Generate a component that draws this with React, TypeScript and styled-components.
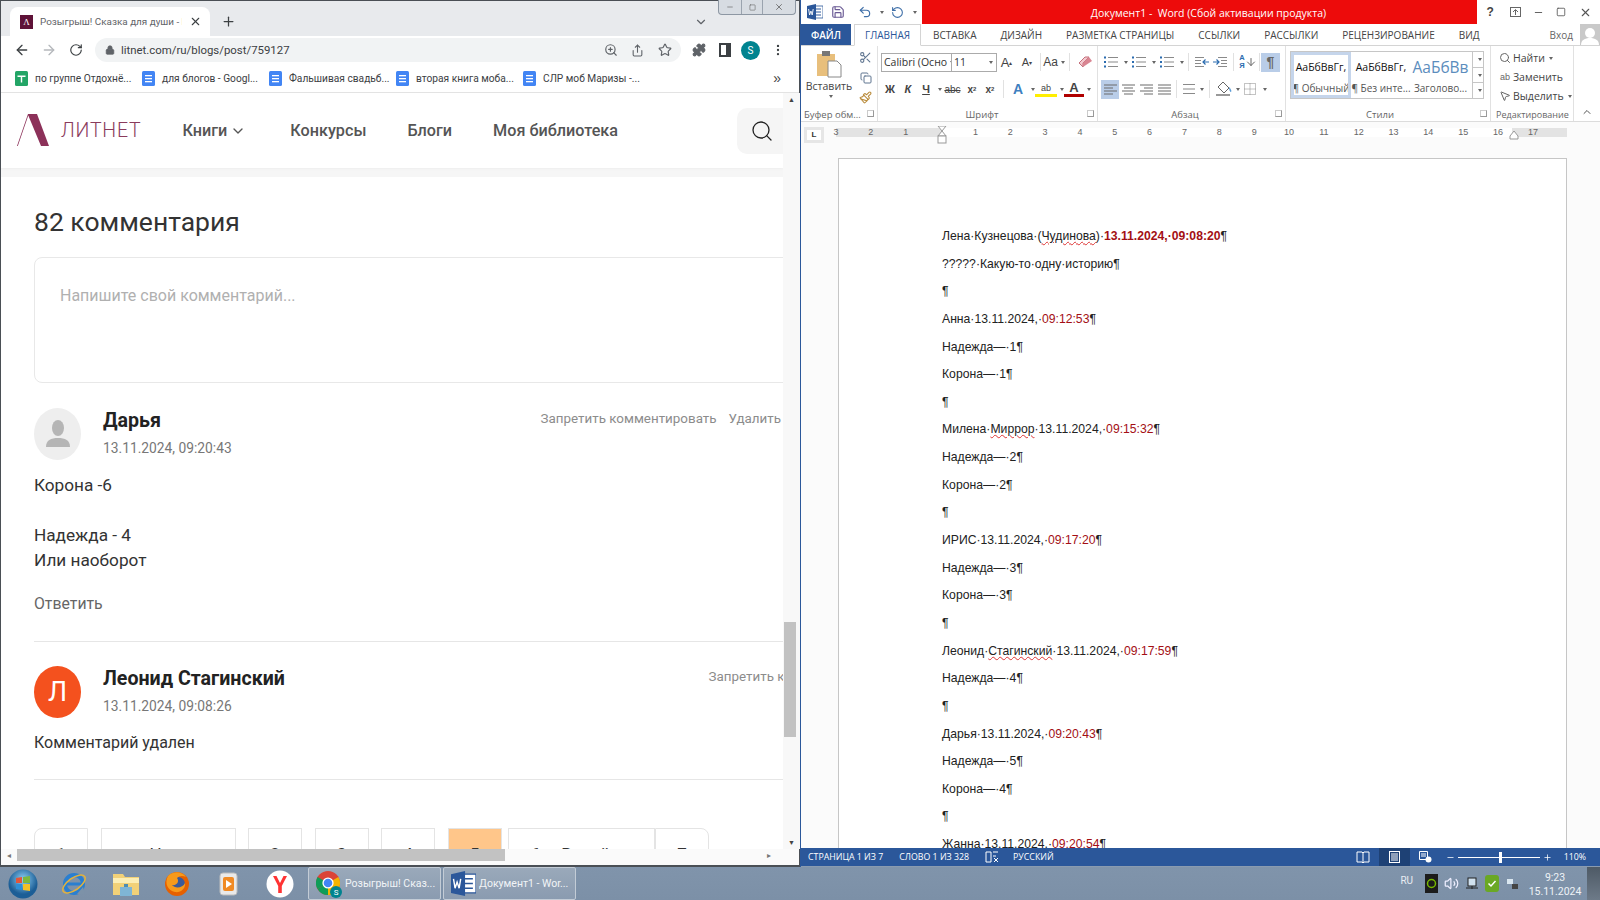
import React from "react";
import styled, { createGlobalStyle } from "styled-components";
import { ArrowLeft, ArrowRight, RotateCw, Lock, ZoomIn, Share, Star, Puzzle, MoreVertical, X, Plus, ChevronDown, Scissors, Copy, Paintbrush, Search, Save, Undo2, RotateCcw, Minus, Square, Volume2, MousePointer2, ChevronUp, ArrowDown } from "lucide-react";

const Global = createGlobalStyle`
  html, body { margin: 0; padding: 0; width: 1600px; height: 900px; overflow: hidden; }
  body { font-family: "Liberation Sans", Arial, sans-serif; background: #7d92a8; }
  * { box-sizing: border-box; }
`;

const Desktop = styled.div`display:flex;flex-direction:column;width:1600px;height:900px;overflow:hidden;`;
const Windows = styled.div`display:flex;height:867px;`;

/* Chrome */
const Browser = styled.section`width:800px;height:867px;display:flex;flex-direction:column;background:#fff;border:1px solid #4a4f55;border-width:1px 1px 2px 1px;position:relative;`;
const TabStrip = styled.div`height:35px;background:#e8eaed;display:flex;align-items:flex-end;padding-left:9px;`;
const Tab = styled.div`width:200px;height:29px;background:#fff;border-radius:8px 8px 0 0;display:flex;align-items:center;padding:0 8px 0 10px;gap:7px;`;
const Favicon = styled.div`width:13px;height:14px;background:#5e1238;color:#fff;font:9px "Liberation Serif",serif;display:flex;align-items:center;justify-content:center;flex:none;`;
const TabTitle = styled.span`font:9.9px Roboto,sans-serif;color:#5f6368;white-space:nowrap;overflow:hidden;flex:1;`;
const NewTab = styled.div`width:36px;height:29px;display:flex;align-items:center;justify-content:center;color:#3c4043;`;
const TabEnd = styled.div`margin-left:auto;width:105px;height:29px;display:flex;align-items:center;color:#5f6368;`;
const Caption = styled.div`position:absolute;top:-1px;right:3px;width:78px;height:15px;display:flex;background:#d7dce2;border:1px solid #8d97a3;border-top:none;border-radius:0 0 4px 4px;`;
const CaptionBtn = styled.div`flex:${p=>p.$w||1};display:flex;align-items:center;justify-content:center;border-right:1px solid #9aa3ae;color:#666;&:last-child{border:none}`;
const Toolbar = styled.div`height:28px;display:flex;align-items:center;padding-left:7px;color:#5f6368;`;
const ToolBtn = styled.div`width:${p=>p.$w||27}px;height:24px;display:flex;align-items:center;justify-content:center;color:${p=>p.$c||"#3c4043"};flex:none;`;
const Omnibox = styled.div`width:586px;height:24px;margin-left:6px;background:#f1f3f4;border-radius:12px;display:flex;align-items:center;padding:0 3px 0 10px;margin-right:4px;flex:none;`;
const UrlText = styled.span`font:11.4px Roboto,sans-serif;color:#3c4043;margin-left:6px;flex:1;`;
const Profile = styled.div`width:19px;height:19px;border-radius:50%;background:#00838f;color:#fff;font:10px Roboto,sans-serif;display:flex;align-items:center;justify-content:center;margin:0 4px;flex:none;`;
const Bookmarks = styled.div`height:29px;display:flex;align-items:center;padding-left:14px;border-bottom:1px solid #e3e3e3;`;
const Bookmark = styled.div`width:127px;display:flex;align-items:center;gap:7px;font:10.2px Roboto,sans-serif;color:#3c4043;white-space:nowrap;flex:none;`;
const BookmarkMore = styled.div`margin-left:auto;padding-right:18px;font:14px "Liberation Sans",sans-serif;color:#444;`;
const Viewport = styled.div`flex:1;min-height:0;display:flex;flex-direction:column;`;
const ViewportTop = styled.div`flex:1;min-height:0;display:flex;`;
const Scroller = styled.div`width:782px;overflow:hidden;display:flex;flex-direction:column;flex:none;`;
const SiteHeader = styled.header`height:75px;display:flex;align-items:center;padding-left:16px;flex:none;box-shadow:0 1px 2px #eee;position:relative;`;
const LogoText = styled.span`font:300 19.5px Roboto,sans-serif;color:#8a3b5c;margin-left:11px;letter-spacing:.8px;`;
const NavItem = styled.a`font:500 16.2px Roboto,sans-serif;color:#555;margin-left:${p=>p.$ml}px;display:flex;align-items:center;gap:3px;`;
const SearchBtn = styled.div`margin-left:auto;width:46px;height:46px;background:#f5f5f5;border-radius:10px 0 0 10px;display:flex;align-items:center;justify-content:center;color:#222;padding-left:4px;`;
const Band = styled.div`height:9px;background:#f6f6f6;flex:none;`;
const Content = styled.main`padding-left:33px;flex:1;min-height:0;`;
const Heading = styled.h2`margin:26px 0 17px;font:400 26.5px/37px Roboto,sans-serif;color:#333;`;
const CommentBox = styled.div`width:800px;height:126px;border:1px solid #e8e8e8;border-radius:8px;padding:27px 25px;font:16px/22px Roboto,sans-serif;color:#b0b0b0;`;
const Comment = styled.article`padding-top:${p=>p.$pt}px;height:${p=>p.$h}px;border-bottom:1px solid #e6e6e6;width:750px;`;
const Head = styled.div`display:flex;width:${p=>p.$w}px;align-items:flex-start;`;
const Avatar = styled.div`width:47px;height:52px;border-radius:50%;background:${p=>p.$bg};color:#fff;font:27px Roboto,sans-serif;display:flex;align-items:center;justify-content:center;flex:none;margin-right:22px;`;
const Meta = styled.div`display:flex;flex-direction:column;`;
const Name = styled.div`font:700 19.6px/26px Roboto,sans-serif;color:#222;`;
const DateText = styled.div`font:13.8px/18px Roboto,sans-serif;color:#777;margin-top:5px;`;
const Actions = styled.div`margin-left:auto;display:flex;gap:12px;font:13.4px/18px Roboto,sans-serif;color:#8c8c8c;white-space:nowrap;padding-top:2px;`;
const Body = styled.div`font:${p=>p.$f||17.2}px/25px Roboto,sans-serif;color:#333;margin-top:${p=>p.$mt||13}px;`;
const Reply = styled.div`font:15.8px/22px Roboto,sans-serif;color:#666;margin-top:20px;`;
const Pager = styled.nav`display:flex;gap:12.5px;margin-top:48px;height:60px;`;
const PageBtn = styled.div`width:${p=>p.$w}px;height:50px;border:1px solid #e4e4e4;background:${p=>p.$on?"#ffc68a":"#fff"};color:#333;font:17px/50px Roboto,sans-serif;text-align:center;flex:none;border-radius:${p=>p.$r||"0"};margin-right:${p=>p.$mr||0}px;`;
const VBar = styled.div`width:17px;background:#f8f8f8;position:relative;flex:none;display:flex;flex-direction:column;align-items:center;justify-content:space-between;padding:3px 0;font-size:7px;color:#444;`;
const VThumb = styled.div`position:absolute;left:1px;top:529px;width:12px;height:115px;background:#c2c2c2;`;
const HBar = styled.div`height:16px;background:#fafafa;display:flex;align-items:center;justify-content:space-between;padding:0 28px 4px 6px;font-size:8px;color:#777;flex:none;position:relative;`;
const HThumb = styled.div`position:absolute;left:16px;top:0;width:488px;height:12px;background:#c2c2c2;`;

/* Word */
const Word = styled.section`width:800px;height:867px;background:#8a9bb0;display:flex;flex-direction:column;border-left:1px solid #2b579a;padding-bottom:1px;`;
const TitleBar = styled.div`height:24px;display:flex;flex:none;background:#fff;`;
const Quick = styled.div`width:121px;display:flex;align-items:center;padding-left:6px;color:#555;flex:none;`;
const Red = styled.div`flex:1;background:#ed0b0b;color:#fff;font:10.5px "Open Sans",sans-serif;display:flex;align-items:center;justify-content:center;padding:2px 0 0 18px;white-space:pre;`;
const WinBtns = styled.div`width:123px;display:flex;align-items:center;flex:none;color:#555;justify-content:space-around;padding:0 2px 0 0;`;
const RibbonTabs = styled.div`height:22px;display:flex;align-items:stretch;flex:none;border-bottom:1px solid #d4d4d4;font:10px "Open Sans",sans-serif;color:#444;background:#fff;`;
const FileTab = styled.div`width:50px;background:#2b579a;color:#fff;display:flex;align-items:center;justify-content:center;font-weight:600;`;
const RTab = styled.div`margin-left:${p=>p.$ml}px;display:flex;align-items:center;padding:0 ${p=>p.$on?10:0}px;white-space:nowrap;color:${p=>p.$on?"#2b579a":"#444"};${p=>p.$on?"border:1px solid #d4d4d4;border-bottom:1px solid #fff;height:22px;background:#fff;":""}`;
const SignIn = styled.div`margin-left:auto;display:flex;align-items:center;gap:7px;color:#666;`;
const UserPic = styled.div`width:20px;height:21px;background:#c9c9c9;display:flex;align-items:flex-end;justify-content:center;color:#fff;`;
const Ribbon = styled.div`height:76px;display:flex;flex:none;border-bottom:1px solid #dcdcdc;position:relative;background:#fff;`;
const Group = styled.div`width:${p=>p.$w}px;border-right:1px solid #e1e1e1;display:flex;flex-direction:column;padding:${p=>p.$p||"4px 0 0 3px"};flex:none;position:relative;`;
const GroupBody = styled.div`height:59px;display:flex;`;
const GroupLabel = styled.div`font:${p=>p.$s||9.5}px "Open Sans",sans-serif;color:#666;text-align:${p=>p.$a||"center"};white-space:nowrap;padding-right:${p=>p.$pr||0}px;`;
const Launcher = styled.span`position:absolute;right:3px;bottom:4px;width:7px;height:7px;border:1px solid #999;border-top-color:#ccc;border-left-color:#ccc;`;
const Paste = styled.div`width:50px;display:flex;flex-direction:column;align-items:center;font:10.5px "Open Sans",sans-serif;color:#444;flex:none;`;
const PasteLabel = styled.span`margin-top:1px;`;
const ClipTools = styled.div`display:flex;flex-direction:column;justify-content:space-between;color:#5f7590;padding:1px 0 4px;width:24px;align-items:center;`;
const Rows = styled.div`display:flex;flex-direction:column;gap:${p=>p.$g||7}px;padding-top:${p=>p.$pt||2}px;`;
const IRow = styled.div`display:flex;align-items:center;height:${p=>p.$h||20}px;`;
const Combo = styled.div`width:${p=>p.$w}px;height:19px;border:1px solid #ababab;font:10.5px "Open Sans",sans-serif;color:#333;display:flex;align-items:center;padding-left:2px;justify-content:space-between;padding-right:3px;white-space:nowrap;overflow:hidden;flex:none;margin-right:-1px;`;
const Slot = styled.div`width:${p=>p.$w}px;height:19px;display:flex;align-items:center;justify-content:center;flex:none;color:${p=>p.$c||"#444"};font:${p=>p.$f||'10.5px "Liberation Sans",sans-serif'};background:${p=>p.$on?"#b9cde8":"transparent"};`;
const ColorSlot = styled(Slot)`height:16px;border-bottom:3px solid ${p=>p.$bar};`;
const Arrow = styled.span`width:0;height:0;border:2px solid transparent;border-top:3px solid #666;margin-left:3px;margin-top:2px;flex:none;`;
const Divider = styled.span`width:1px;height:18px;background:#e1e1e1;flex:none;margin:0 ${p=>p.$m||3}px;`;
const Gallery = styled.div`width:194px;height:48px;border:1px solid #c6c6c6;display:flex;margin:1px 0 0 4px;`;
const StyleItem = styled.div`width:${p=>p.$w}px;display:flex;flex-direction:column;align-items:center;justify-content:center;gap:6px;padding-top:3px;flex:none;white-space:nowrap;overflow:hidden;${p=>p.$on?"border:3px solid #c5d5eb;":""}`;
const StyleSample = styled.span`font:${p=>p.$big?'15.5px/18px "Open Sans"':'10.5px/18px "Open Sans"'},sans-serif;color:${p=>p.$big?"#5b8dbd":"#111"};`;
const StyleName = styled.span`font:10px/13px "Open Sans",sans-serif;color:#555;`;
const GalleryScroll = styled.div`margin-left:auto;width:11px;border-left:1px solid #c6c6c6;display:flex;flex-direction:column;`;
const GalleryStep = styled.div`flex:1;border-bottom:1px solid #c6c6c6;display:flex;align-items:center;justify-content:center;&:last-child{border:none}`;
const EditRows = styled.div`display:flex;flex-direction:column;padding:0 0 0 2px;gap:3px;`;
const EditRow = styled.div`display:flex;align-items:center;height:16px;gap:1px;font:10.5px "Open Sans",sans-serif;color:#444;white-space:nowrap;`;
const EditIcon = styled.span`width:14px;display:flex;justify-content:center;color:#666;font:9px "Liberation Sans",sans-serif;`;
const Collapse = styled.div`position:absolute;right:7px;bottom:3px;color:#555;display:flex;`;
const RulerRow = styled.div`height:36px;flex:none;display:flex;background:#fbfbfb;padding:5px 0 0 3px;position:relative;`;
const LBtn = styled.div`width:20px;height:16px;background:#fff;border:3px solid #e6e6e6;font:700 8px/10px "Liberation Sans",sans-serif;color:#333;text-align:center;flex:none;`;
const Ruler = styled.div`margin-left:-5.4px;width:748px;height:9px;margin-top:1px;display:flex;align-items:center;background:
  linear-gradient(90deg,transparent 17.4px,#e3e3e3 17.4px,#e3e3e3 123.4px,#fff 123.4px,#fff 693.4px,#e3e3e3 693.4px);`;
const RulerCell = styled.span`width:34.85px;flex:none;text-align:center;font:9px/9px "Liberation Sans",sans-serif;color:#666;`;
const IndentMark = styled.div`position:absolute;left:${p=>p.$x}px;top:4px;`;
const DocArea = styled.div`flex:1;min-height:0;background:#fbfbfb;overflow:hidden;padding:0 33px 0 37px;`;
const Paper = styled.div`background:#fff;border:1px solid #c6c6c6;min-height:800px;padding:64px 0 0 103px;`;
const DocLine = styled.div`height:27.65px;font:12.2px/27.65px "Liberation Sans",sans-serif;color:#222;white-space:pre;`;
const Mark = styled.span`color:${p=>p.$red?"#a30f14":"inherit"};font-weight:${p=>p.$b?700:400};${p=>p.$w?"text-decoration:underline wavy #d33;text-decoration-thickness:1px;":""}`;
const Status = styled.footer`height:18px;flex:none;background:#2b579a;color:#fff;font:8.8px "Open Sans",sans-serif;display:flex;align-items:center;padding-left:7px;white-space:nowrap;`;
const StatusItem = styled.span`margin:0 ${p=>p.$mr||0}px 0 ${p=>p.$ml||0}px;display:flex;`;
const StatusRight = styled.div`margin-left:auto;display:flex;align-items:center;height:18px;`;
const ViewBtn = styled.div`width:31px;height:18px;display:flex;align-items:center;justify-content:center;background:${p=>p.$on?"#1e4175":"transparent"};margin-right:${p=>p.$mr||0}px;`;
const ZoomTrack = styled.div`width:82px;height:1px;background:#fff;margin:0 3px;position:relative;`;
const ZoomThumb = styled.span`position:absolute;left:41px;top:-5px;width:3px;height:11px;background:#fff;`;

/* Taskbar */
const Taskbar = styled.footer`height:33px;flex:none;display:flex;align-items:center;background:linear-gradient(#8094ab,#7c90a7);color:#fff;`;
const PinRow = styled.div`display:flex;margin-left:-3px;`;
const Pin = styled.div`width:51.5px;height:33px;display:flex;align-items:center;justify-content:center;flex:none;`;
const TaskBtn = styled.div`width:${p=>p.$w}px;height:33px;margin-left:${p=>p.$ml}px;background:linear-gradient(#9aa9ba,#8a9bb0);border:1px solid #c3ccd6;border-radius:2px;display:flex;align-items:center;gap:3px;padding-left:7px;font:10.5px Roboto,sans-serif;color:#f1f4f7;white-space:nowrap;flex:none;`;
const Tray = styled.div`margin-left:auto;display:flex;align-items:center;height:33px;`;
const TrayText = styled.span`font:10px Roboto,sans-serif;color:#e8edf2;margin-right:8px;padding-bottom:6px;`;
const TrayIcon = styled.div`width:20.4px;display:flex;justify-content:center;flex:none;`;
const Clock = styled.div`width:60px;margin-left:2px;text-align:center;font:10.5px/14px Roboto,sans-serif;color:#eef2f6;padding-top:2px;`;
const ShowDesktop = styled.div`width:13px;height:33px;margin-left:2px;background:linear-gradient(#4e5a66,#6d7a88);`;

const Lines = ({ n = 3, w = 14, dots = false, c = "#8a8a8a" }: { n?: number; w?: number; dots?: boolean; c?: string }) => (
  <svg width={w} height="12" viewBox={`0 0 ${w} 12`}>
    {Array.from({ length: n }).map((_, i) => {
      const y = 1.5 + (i * 9) / (n - 1);
      return <g key={i}>{dots && <rect x="0" y={y - 1} width="2" height="2" fill="#2b6cb0" />}<rect x={dots ? 4 : 0} y={y - 0.5} width={dots ? w - 4 : w} height="1" fill={c} /></g>;
    })}
  </svg>
);
const Indent = ({ flip = false }: { flip?: boolean }) => (
  <svg width="14" height="12" viewBox="0 0 14 12" style={flip ? { transform: "scaleX(-1)" } : undefined}>
    <path d="M5 1.5h9M8 4.5h6M8 7.5h6M5 10.5h9" stroke="#8a8a8a" fill="none" />
    <path d="M0 6h6M3.5 3.5L6 6 3.5 8.5" stroke="#2b6cb0" fill="none" strokeWidth="1.2" />
  </svg>
);
const Align = ({ m }: { m: "l" | "c" | "r" | "j" }) => {
  const rows = [13, 9, 13, 9];
  return (
    <svg width="13" height="11" viewBox="0 0 13 11">
      {rows.map((r, i) => {
        const w = m === "j" ? 13 : r;
        const x = m === "l" || m === "j" ? 0 : m === "c" ? (13 - w) / 2 : 13 - w;
        return <rect key={i} x={x} y={i * 3 + 0.5} width={w} height="1" fill="#6a6a6a" />;
      })}
    </svg>
  );
};
const DocIcon = () => (
  <svg width="13" height="15" viewBox="0 0 13 15" style={{ flex: "none" }}>
    <rect width="13" height="15" rx="1.5" fill="#4285f4" />
    <rect x="3" y="4" width="7" height="1.3" fill="#fff" /><rect x="3" y="7" width="7" height="1.3" fill="#fff" /><rect x="3" y="10" width="7" height="1.3" fill="#fff" />
  </svg>
);
const SheetIcon = () => (
  <svg width="13" height="15" viewBox="0 0 13 15" style={{ flex: "none" }}>
    <rect width="13" height="15" rx="1.5" fill="#23a566" />
    <path d="M2.5 4.5h8v1.4h-3.3v5.6H5.8V5.9H2.5z" fill="#fff" />
  </svg>
);
const WordGlyph = ({ s = 16 }: { s?: number }) => (
  <svg width={s} height={s} viewBox="0 0 16 16">
    <rect x="6" y="2" width="10" height="12" fill="#fff" stroke="#2b579a" strokeWidth=".8" />
    <path d="M8 5h6M8 8h6M8 11h6" stroke="#2b579a" strokeWidth="1" />
    <path d="M0 2l9-2v16l-9-2z" fill="#2b579a" />
    <path d="M1.6 5l1 6 1.3-4 1.3 4 1-6" fill="none" stroke="#fff" strokeWidth=".9" />
  </svg>
);
const ChromeGlyph = () => (
  <svg width="26" height="28" viewBox="0 0 26 28">
    <circle cx="12" cy="13" r="12" fill="#db4437" />
    <path d="M12 13L1.6 19A12 12 0 0 0 12 25z" fill="#0f9d58" />
    <path d="M1.6 19A12 12 0 0 1 1.6 7L12 13z" fill="#0f9d58" />
    <path d="M12 13l10.4-6A12 12 0 0 1 12 25z" fill="#f4b400" />
    <circle cx="12" cy="13" r="5.6" fill="#fff" /><circle cx="12" cy="13" r="4.3" fill="#4285f4" />
    <circle cx="20" cy="22" r="6" fill="#00838f" /><text x="20" y="25" fontSize="8" fill="#fff" textAnchor="middle" fontFamily="Roboto">S</text>
  </svg>
);

type Seg = { t: string; red?: boolean; b?: boolean; w?: boolean };
const D = (t: string): Seg[] => [{ t }];
const T = (name: Seg[], date: string, time: string): Seg[] => [...name, { t: date + ",·" }, { t: time, red: true }, { t: "¶" }];
const doc: Seg[][] = [
  [{ t: "Лена·Кузнецова·(" }, { t: "Чудинова", w: true }, { t: ")·" }, { t: "13.11.2024,·09:08:20", red: true, b: true }, { t: "¶" }],
  D("?????·Какую-то·одну·историю¶"), D("¶"),
  T([{ t: "Анна·" }], "13.11.2024", "09:12:53"), D("Надежда—·1¶"), D("Корона—·1¶"), D("¶"),
  T([{ t: "Милена·" }, { t: "Миррор", w: true }, { t: "·" }], "13.11.2024", "09:15:32"), D("Надежда—·2¶"), D("Корона—·2¶"), D("¶"),
  T([{ t: "ИРИС·" }], "13.11.2024", "09:17:20"), D("Надежда—·3¶"), D("Корона—·3¶"), D("¶"),
  T([{ t: "Леонид·" }, { t: "Стагинский", w: true }, { t: "·" }], "13.11.2024", "09:17:59"), D("Надежда—·4¶"), D("¶"),
  T([{ t: "Дарья·" }], "13.11.2024", "09:20:43"), D("Надежда—·5¶"), D("Корона—·4¶"), D("¶"),
  T([{ t: "Жанна·" }], "13.11.2024", "09:20:54"),
];
const ruler = ["3", "2", "1", "", "1", "2", "3", "4", "5", "6", "7", "8", "9", "10", "11", "12", "13", "14", "15", "16", "17"];
const marks = ["по группе Отдохнё...", "для блогов - Googl...", "Фальшивая свадьб...", "вторая книга моба...", "СЛР моб Маризы -..."];
const tabs: [string, number][] = [["ВСТАВКА", 12], ["ДИЗАЙН", 24], ["РАЗМЕТКА СТРАНИЦЫ", 24], ["ССЫЛКИ", 24], ["РАССЫЛКИ", 24], ["РЕЦЕНЗИРОВАНИЕ", 24], ["ВИД", 24]];

export default function App() {
  return (
    <Desktop>
      <Global />
      <Windows>
        <Browser>
          <TabStrip>
            <Tab>
              <Favicon>Λ</Favicon>
              <TabTitle>Розыгрыш! Сказка для души - Б</TabTitle>
              <X size={13} color="#3c4043" />
            </Tab>
            <NewTab><Plus size={15} /></NewTab>
            <TabEnd><ChevronDown size={14} /></TabEnd>
          </TabStrip>
          <Caption>
            <CaptionBtn $w={1.1}><Minus size={8} /></CaptionBtn>
            <CaptionBtn><Square size={7} /></CaptionBtn>
            <CaptionBtn $w={1.6}><X size={10} /></CaptionBtn>
          </Caption>
          <Toolbar>
            <ToolBtn><ArrowLeft size={16} /></ToolBtn>
            <ToolBtn $c="#b5b8bc"><ArrowRight size={16} /></ToolBtn>
            <ToolBtn><RotateCw size={14} /></ToolBtn>
            <Omnibox>
              <Lock size={10} fill="#5f6368" color="#5f6368" />
              <UrlText>litnet.com/ru/blogs/post/759127</UrlText>
              <ToolBtn $w={27} $c="#5f6368"><ZoomIn size={14} /></ToolBtn>
              <ToolBtn $w={27} $c="#5f6368"><Share size={13} /></ToolBtn>
              <ToolBtn $w={27} $c="#5f6368"><Star size={14} /></ToolBtn>
            </Omnibox>
            <ToolBtn $w={27} $c="#5f6368"><Puzzle size={14} fill="#5f6368" /></ToolBtn>
            <ToolBtn $w={25}><svg width="12" height="14" viewBox="0 0 12 14"><rect x="1" y="1" width="10" height="12" fill="none" stroke="#3c4043" strokeWidth="2" /><rect x="7" y="1" width="4" height="12" fill="#3c4043" /></svg></ToolBtn>
            <Profile>S</Profile>
            <ToolBtn $w={27}><MoreVertical size={14} /></ToolBtn>
          </Toolbar>
          <Bookmarks>
            {marks.map((m, i) => (
              <Bookmark key={m}>{i === 0 ? <SheetIcon /> : <DocIcon />}{m}</Bookmark>
            ))}
            <BookmarkMore>»</BookmarkMore>
          </Bookmarks>
          <Viewport>
            <ViewportTop>
              <Scroller>
                <SiteHeader>
                  <svg width="33" height="33" viewBox="0 0 33 33">
                    <path d="M11 0H20L32 32H24L11.3 1.5 .8 32H0Z" fill="#8c3159" />
                  </svg>
                  <LogoText>ЛИТНЕТ</LogoText>
                  <NavItem $ml={41}>Книги <ChevronDown size={16} /></NavItem>
                  <NavItem $ml={44}>Конкурсы</NavItem>
                  <NavItem $ml={41}>Блоги</NavItem>
                  <NavItem $ml={41}>Моя библиотека</NavItem>
                  <SearchBtn><Search size={24} strokeWidth={1.3} /></SearchBtn>
                </SiteHeader>
                <Band />
                <Content>
                  <Heading>82 комментария</Heading>
                  <CommentBox>Напишите свой комментарий...</CommentBox>
                  <Comment $pt={25} $h={259}>
                    <Head $w={747}>
                      <Avatar $bg="#eeeeee">
                        <svg width="24" height="28" viewBox="0 0 24 28"><ellipse cx="12" cy="8" rx="6" ry="8" fill="#b5b5b5" /><path d="M0 27c0-7 5-9 12-9s12 2 12 9z" fill="#b5b5b5" /></svg>
                      </Avatar>
                      <Meta><Name>Дарья</Name><DateText>13.11.2024, 09:20:43</DateText></Meta>
                      <Actions><span>Запретить комментировать</span><span>Удалить</span></Actions>
                    </Head>
                    <Body>Корона -6</Body>
                    <Body $mt={25}>Надежда - 4<br />Или наоборот</Body>
                    <Reply>Ответить</Reply>
                  </Comment>
                  <Comment $pt={24} $h={138}>
                    <Head $w={915}>
                      <Avatar $bg="#f4511e">Л</Avatar>
                      <Meta><Name>Леонид Стагинский</Name><DateText>13.11.2024, 09:08:26</DateText></Meta>
                      <Actions><span>Запретить комментировать</span><span>Удалить</span></Actions>
                    </Head>
                    <Body $mt={12} $f={16}>Комментарий удален</Body>
                  </Comment>
                  <Pager>
                    <PageBtn $w={54} $r="8px 0 0 0">1</PageBtn>
                    <PageBtn $w={135}>↑ Назад</PageBtn>
                    <PageBtn $w={54}>2</PageBtn>
                    <PageBtn $w={54}>3</PageBtn>
                    <PageBtn $w={54}>4</PageBtn>
                    <PageBtn $w={54} $on $mr={-6}>5</PageBtn>
                    <PageBtn $w={147} $mr={-12.5}>6 &nbsp; &nbsp; Вперёд ↑</PageBtn>
                    <PageBtn $w={54} $r="0 8px 0 0">7</PageBtn>
                  </Pager>
                </Content>
              </Scroller>
              <VBar>
                <span>▲</span><VThumb /><span>▼</span>
              </VBar>
            </ViewportTop>
            <HBar><span>◂</span><HThumb /><span>▸</span></HBar>
          </Viewport>
        </Browser>

        <Word>
          <TitleBar>
            <Quick>
              <WordGlyph />
              <Slot $w={30} $c="#6b5b95"><Save size={14} /></Slot>
              <Slot $w={24} $c="#3f6fa8"><Undo2 size={14} /></Slot>
              <Arrow />
              <Slot $w={26} $c="#3f6fa8"><RotateCcw size={13} /></Slot>
              <Arrow />
            </Quick>
            <Red>Документ1 -  Word (Сбой активации продукта)</Red>
            <WinBtns>
              <Slot $w={14} $f='700 12px "Liberation Sans",sans-serif'>?</Slot>
              <svg width="11" height="10" viewBox="0 0 11 10"><rect x=".5" y=".5" width="10" height="9" fill="none" stroke="#666" /><path d="M5.5 8V3M3 5l2.5-2.5L8 5" stroke="#666" fill="none" /></svg>
              <Minus size={11} />
              <Square size={10} />
              <X size={13} />
            </WinBtns>
          </TitleBar>
          <RibbonTabs>
            <FileTab>ФАЙЛ</FileTab>
            <RTab $ml={3} $on>ГЛАВНАЯ</RTab>
            {tabs.map(([t, ml]) => <RTab key={t} $ml={ml}>{t}</RTab>)}
            <SignIn>Вход<UserPic><svg width="20" height="18" viewBox="0 0 20 18"><circle cx="10" cy="6" r="5" fill="#fff" /><path d="M1 18c0-5 4-7 9-7s9 2 9 7z" fill="#fff" /></svg></UserPic></SignIn>
          </RibbonTabs>
          <Ribbon>
            <Group $w={77}>
              <GroupBody>
                <Paste>
                  <svg width="26" height="28" viewBox="0 0 26 28"><rect x="1" y="4" width="18" height="22" fill="#e8bf7c" /><rect x="6" y="1" width="8" height="5" fill="#777" /><path d="M12 11h9l4 4v12H12z" fill="#fff" stroke="#888" /></svg>
                  <PasteLabel>Вставить</PasteLabel>
                  <Arrow />
                </Paste>
                <ClipTools><Scissors size={13} /><Copy size={12} /><Paintbrush size={13} color="#b98b3b" /></ClipTools>
              </GroupBody>
              <GroupLabel $a="left">Буфер обм...</GroupLabel>
              <Launcher />
            </Group>
            <Group $w={220} $p="4px 0 0 3px">
              <GroupBody>
                <Rows>
                  <IRow>
                    <Combo $w={71}>Calibri (Осно<Arrow /></Combo>
                    <Combo $w={46}>11<Arrow /></Combo>
                    <Slot $w={21} $f='13px "Liberation Sans",sans-serif'>A<sup style={{ fontSize: 6 }}>▴</sup></Slot>
                    <Slot $w={20} $f='11px "Liberation Sans",sans-serif'>A<sup style={{ fontSize: 6 }}>▾</sup></Slot>
                    <Divider />
                    <Slot $w={20} $f='12px "Liberation Sans",sans-serif'>Aa<Arrow /></Slot>
                    <Divider $m={5} />
                    <Slot $w={20}>
                      <svg width="15" height="13" viewBox="0 0 15 13"><path d="M5 11L1 7l6-6h4L5 7z" fill="#f3c9cf" stroke="#c4707c" /><path d="M5 11l9-6-3-4L5 7z" fill="#d98592" /></svg>
                    </Slot>
                  </IRow>
                  <IRow>
                    <Slot $w={18} $f='700 11px "Liberation Sans",sans-serif'>Ж</Slot>
                    <Slot $w={18} $f='italic 700 11px "Liberation Sans",sans-serif'>К</Slot>
                    <Slot $w={18} $f='700 11px "Liberation Sans",sans-serif' style={{ textDecoration: "underline" }}>Ч</Slot>
                    <Arrow />
                    <Slot $w={21} $f='10px "Liberation Sans",sans-serif' style={{ textDecoration: "line-through" }}>abc</Slot>
                    <Slot $w={18} $f='700 10px "Liberation Sans",sans-serif'>x<sub style={{ fontSize: 6 }}>2</sub></Slot>
                    <Slot $w={18} $f='700 10px "Liberation Sans",sans-serif'>x<sup style={{ fontSize: 6 }}>2</sup></Slot>
                    <Divider $m={4} />
                    <Slot $w={20} $c="#3f7fbf" $f='700 14px "Liberation Sans",sans-serif'>A</Slot><Arrow />
                    <ColorSlot $w={22} $bar="#ffee00" $f='9px "Liberation Sans",sans-serif'>ab</ColorSlot><Arrow />
                    <ColorSlot $w={20} $bar="#b00000" $f='700 13px "Liberation Sans",sans-serif'>A</ColorSlot><Arrow />
                  </IRow>
                </Rows>
              </GroupBody>
              <GroupLabel $pr={14}>Шрифт</GroupLabel>
              <Launcher />
            </Group>
            <Group $w={188} $p="4px 0 0 3px">
              <GroupBody>
                <Rows>
                  <IRow>
                    <Slot $w={20}><Lines dots /></Slot><Arrow />
                    <Slot $w={21}><Lines dots /></Slot><Arrow />
                    <Slot $w={21}><Lines dots /></Slot><Arrow />
                    <Divider $m={4} />
                    <Slot $w={18}><Indent flip /></Slot>
                    <Slot $w={18}><Indent /></Slot>
                    <Divider $m={4} />
                    <Slot $w={20} $f='700 7.5px/8px "Liberation Sans",sans-serif' $c="#2b6cb0">
                      <span>А<br />Я</span><ArrowDown size={12} color="#666" />
                    </Slot>
                    <Divider $m={1} />
                    <Slot $w={19} $on $f='700 14px "Liberation Sans",sans-serif' $c="#666">¶</Slot>
                  </IRow>
                  <IRow>
                    <Slot $w={18} $on><Align m="l" /></Slot>
                    <Slot $w={18}><Align m="c" /></Slot>
                    <Slot $w={18}><Align m="r" /></Slot>
                    <Slot $w={18}><Align m="j" /></Slot>
                    <Divider $m={3} />
                    <Slot $w={17}><Lines w={12} /></Slot><Arrow />
                    <Divider $m={5} />
                    <Slot $w={18} $c="#666">
                      <svg width="17" height="16" viewBox="0 0 17 16"><path d="M7 1l6 6-5 5-6-6z" fill="#fff" stroke="#666" /><path d="M13 6c2 2 3 4 2 5-1 0-2-2-2-5z" fill="#5b9bd5" /><rect x="0" y="13" width="14" height="2" fill="#999" /></svg>
                    </Slot><Arrow />
                    <Slot $w={20}><svg width="12" height="12" viewBox="0 0 12 12"><path d="M.5.5h11v11H.5zM6 .5v11M.5 6h11" fill="none" stroke="#888" strokeDasharray="1 1" /></svg></Slot><Arrow />
                  </IRow>
                </Rows>
              </GroupBody>
              <GroupLabel $pr={16}>Абзац</GroupLabel>
              <Launcher />
            </Group>
            <Group $w={205} $p="4px 0 0 0">
              <GroupBody>
                <Gallery>
                  <StyleItem $w={60} $on><StyleSample>АаБбВвГг,</StyleSample><StyleName>¶ Обычный</StyleName></StyleItem>
                  <StyleItem $w={60}><StyleSample>АаБбВвГг,</StyleSample><StyleName>¶ Без инте...</StyleName></StyleItem>
                  <StyleItem $w={59}><StyleSample $big>АаБбВв</StyleSample><StyleName>Заголово...</StyleName></StyleItem>
                  <GalleryScroll><GalleryStep><Arrow /></GalleryStep><GalleryStep><Arrow /></GalleryStep><GalleryStep><Arrow /></GalleryStep></GalleryScroll>
                </Gallery>
              </GroupBody>
              <GroupLabel $pr={16}>Стили</GroupLabel>
              <Launcher />
            </Group>
            <Group $w={83} $p="4px 0 0 5px">
              <GroupBody>
                <EditRows>
                  <EditRow><EditIcon><Search size={12} /></EditIcon>Найти <Arrow /></EditRow>
                  <EditRow><EditIcon>ab</EditIcon>Заменить</EditRow>
                  <EditRow><EditIcon><MousePointer2 size={12} /></EditIcon>Выделить<Arrow /></EditRow>
                </EditRows>
              </GroupBody>
              <GroupLabel $a="left" $s={9}>Редактирование</GroupLabel>
            </Group>
            <Collapse><ChevronUp size={12} /></Collapse>
          </Ribbon>
          <RulerRow>
            <LBtn>L</LBtn>
            <Ruler>{ruler.map((r, i) => <RulerCell key={i}>{r}</RulerCell>)}</Ruler>
            <IndentMark $x={136}><svg width="11" height="19" viewBox="0 0 11 19"><path d="M1 0h8L5 5zM5 5l4 5H1z" fill="#fff" stroke="#999" /><rect x="1" y="10" width="8" height="7" fill="#fff" stroke="#999" /></svg></IndentMark>
            <IndentMark $x={708}><svg width="11" height="10" viewBox="0 0 11 10"><path d="M5 1l4 5v3H1V6z" fill="#fff" stroke="#999" /></svg></IndentMark>
          </RulerRow>
          <DocArea>
            <Paper>
              {doc.map((l, i) => (
                <DocLine key={i}>{l.map((s, j) => <Mark key={j} $red={s.red} $b={s.b} $w={s.w}>{s.t}</Mark>)}</DocLine>
              ))}
            </Paper>
          </DocArea>
          <Status>
            <StatusItem $mr={16}>СТРАНИЦА 1 ИЗ 7</StatusItem>
            <StatusItem $mr={16}>СЛОВО 1 ИЗ 328</StatusItem>
            <StatusItem $mr={14}><svg width="14" height="12" viewBox="0 0 14 12"><path d="M1 1h5v10H1zM8 1h5M8 5h3" fill="none" stroke="#fff" /><path d="M9 7l4 4M13 7l-4 4" stroke="#fff" /></svg></StatusItem>
            <StatusItem>РУССКИЙ</StatusItem>
            <StatusRight>
              <ViewBtn><svg width="14" height="12" viewBox="0 0 14 12"><path d="M1 1h5l1 1 1-1h5v10H8l-1 1-1-1H1z" fill="none" stroke="#fff" /><path d="M7 2v9" stroke="#fff" /></svg></ViewBtn>
              <ViewBtn $on><svg width="11" height="12" viewBox="0 0 11 12"><rect x=".5" y=".5" width="10" height="11" fill="none" stroke="#fff" /><path d="M2 3h7M2 5h7M2 7h7M2 9h7" stroke="#fff" /></svg></ViewBtn>
              <ViewBtn $mr={5}><svg width="13" height="12" viewBox="0 0 13 12"><path d="M.5.5h8v8H.5zM2 3h5M2 5h5" fill="none" stroke="#fff" /><circle cx="9.5" cy="8.5" r="3" fill="#fff" /></svg></ViewBtn>
              <Minus size={9} />
              <ZoomTrack><ZoomThumb /></ZoomTrack>
              <Plus size={9} />
              <StatusItem $ml={12} $mr={14}>110%</StatusItem>
            </StatusRight>
          </Status>
        </Word>
      </Windows>
      <Taskbar>
        <PinRow>
          <Pin>
            <svg width="30" height="30" viewBox="0 0 30 30"><defs><radialGradient id="orb" cx="50%" cy="35%"><stop offset="0%" stopColor="#8fd0f5" /><stop offset="100%" stopColor="#1c5e96" /></radialGradient></defs><circle cx="15" cy="15" r="14.5" fill="url(#orb)" /><path d="M8 9l6-1v6H8z" fill="#e2563b" /><path d="M15 8l7-1v7h-7z" fill="#7cb83f" /><path d="M8 15h6v6l-6-1z" fill="#2f8fd6" /><path d="M15 15h7v7l-7-1z" fill="#f4c026" /></svg>
          </Pin>
          <Pin>
            <svg width="26" height="28" viewBox="0 0 26 28"><circle cx="13" cy="14" r="9" fill="none" stroke="#2a7fd0" strokeWidth="4" /><path d="M5 14h16" stroke="#2a7fd0" strokeWidth="3" /><path d="M22 17l-6 7h8z" fill="#7d92a8" /><ellipse cx="13" cy="14" rx="13" ry="6" fill="none" stroke="#e3b23c" strokeWidth="1.5" transform="rotate(-35 13 14)" /></svg>
          </Pin>
          <Pin>
            <svg width="28" height="26" viewBox="0 0 28 26"><path d="M1 3h10l2 3h14v18H1z" fill="#f1d178" /><rect x="1" y="7" width="26" height="5" fill="#fbeeb5" /><path d="M8 16h12v9H8z" fill="#7fb5d5" /><rect x="12" y="13" width="4" height="3" fill="#4d8db3" /></svg>
          </Pin>
          <Pin>
            <svg width="26" height="27" viewBox="0 0 26 27"><circle cx="13" cy="14" r="12" fill="#e66000" /><circle cx="14" cy="14" r="7" fill="#3c5a99" /><path d="M4 6c5-5 14-5 18 1-4-2-7-1-9 1 3 4-1 8-5 7 3 4 11 3 13-2 1 6-5 10-10 9-7-1-11-9-7-16z" fill="#f79a1b" /></svg>
          </Pin>
          <Pin>
            <svg width="24" height="26" viewBox="0 0 24 26"><rect x="3" y="2" width="17" height="22" rx="3" fill="#e9e9e9" stroke="#bcbcbc" /><rect x="6" y="6" width="11" height="14" rx="2" fill="#f08a24" /><path d="M9 9l6 4-6 4z" fill="#fff" /></svg>
          </Pin>
          <Pin>
            <svg width="28" height="28" viewBox="0 0 28 28"><circle cx="14" cy="14" r="13.5" fill="#fff" /><path d="M7 6h3.5L14 13l3.5-7H21l-5.2 10v7h-3.6v-7z" fill="#f33" /></svg>
          </Pin>
        </PinRow>
        <TaskBtn $w={133} $ml={2}><ChromeGlyph />Розыгрыш! Сказ...</TaskBtn>
        <TaskBtn $w={133} $ml={2}><WordGlyph s={25} />Документ1 - Wor...</TaskBtn>
        <Tray>
          <TrayText>RU</TrayText>
          <TrayIcon><svg width="13" height="19" viewBox="0 0 13 19"><rect width="13" height="19" fill="#1c1c1c" /><circle cx="6.5" cy="9.5" r="4" fill="none" stroke="#76b900" strokeWidth="1.5" /></svg></TrayIcon>
          <TrayIcon><Volume2 size={15} color="#eef" /></TrayIcon>
          <TrayIcon><svg width="14" height="16" viewBox="0 0 14 16"><rect x="3" y="2" width="8" height="8" fill="#cfe0ee" stroke="#222" /><path d="M1 12h12M7 10v3" stroke="#222" /></svg></TrayIcon>
          <TrayIcon><svg width="14" height="17" viewBox="0 0 14 17"><rect width="14" height="17" rx="3" fill="#6aa824" /><path d="M3.5 8.5l2.5 2.5 4.5-5" fill="none" stroke="#fff" strokeWidth="1.5" /></svg></TrayIcon>
          <TrayIcon><svg width="13" height="12" viewBox="0 0 13 12"><rect x="1" y="1" width="6" height="5" fill="#d9e6ef" /><rect x="6" y="6" width="6" height="5" fill="#444" /></svg></TrayIcon>
          <Clock>9:23<br />15.11.2024</Clock>
          <ShowDesktop />
        </Tray>
      </Taskbar>
    </Desktop>
  );
}
